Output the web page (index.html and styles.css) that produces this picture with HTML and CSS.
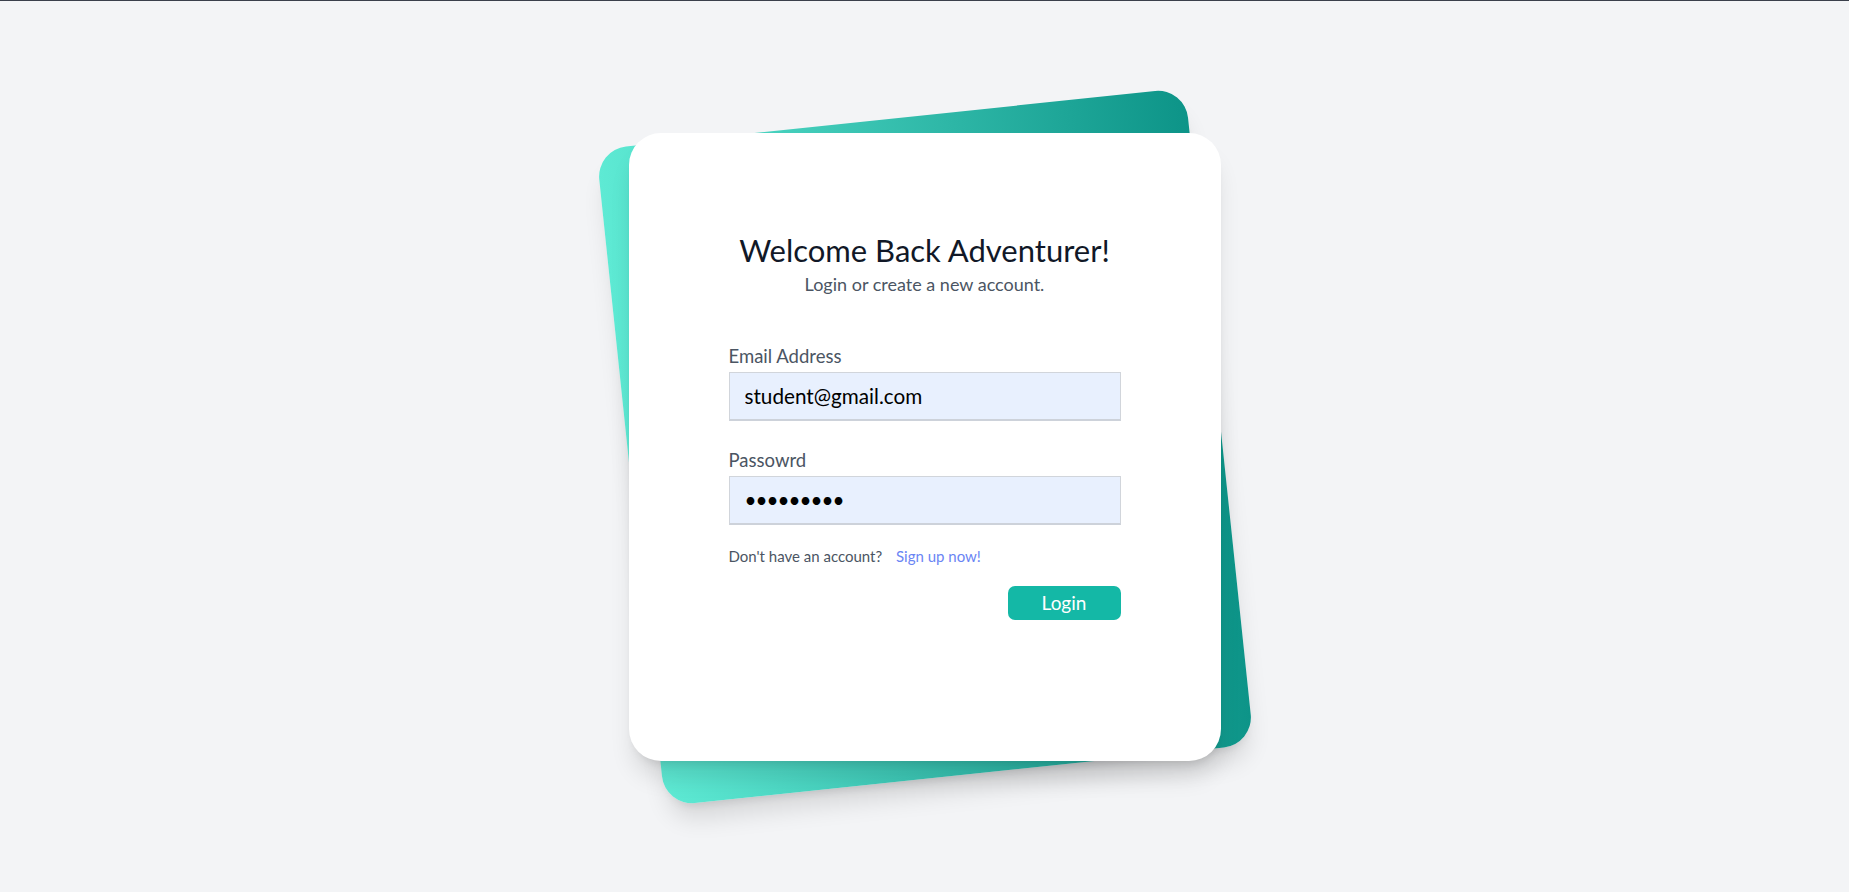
FILE: index.html
```html
<!DOCTYPE html>
<html lang="en">
<head>
<meta charset="utf-8">
<title>Login</title>
<link rel="stylesheet" href="styles.css">
</head>
<body>
<main class="page">
  <div class="stack">
    <div class="back"></div>
    <form class="card">
      <h1 class="title">Welcome Back Adventurer!</h1>
      <p class="subtitle">Login or create a new account.</p>
      <label class="label" for="email">Email Address</label>
      <input class="field" id="email" type="email" value="student@gmail.com">
      <label class="label label-2" for="pw">Passowrd</label>
      <input class="field field-pw" id="pw" type="password" value="studentpw">
      <p class="signup">Don't have an account? <a class="signup-link" href="#">Sign up now!</a></p>
      <div class="actions">
        <button class="btn" type="button">Login</button>
      </div>
    </form>
  </div>
</main>
</body>
</html>
```
FILE: styles.css
```css
* { box-sizing: border-box; }
html, body { margin: 0; padding: 0; }
body {
  background: #f3f4f6;
  border-top: 1px solid #3a3f4b;
  font-family: "Lato", "Noto Sans", sans-serif;
  color: #111827;
}
.page {
  height: calc(100vh - 1px);
  display: flex;
  align-items: center;
  justify-content: center;
}
.stack {
  position: relative;
  width: 592px;
}
.back {
  position: absolute;
  left: 0;
  top: -15.5px;
  width: 592px;
  height: 660px;
  border-radius: 30px;
  background: linear-gradient(to right, #5eead4, #0d9488);
  transform: rotate(-6deg);
  box-shadow: 0 20px 25px -5px rgba(0,0,0,0.12), 0 8px 10px -6px rgba(0,0,0,0.1);
}
.card {
  position: relative;
  background: #fff;
  border-radius: 32px;
  padding: 99px 100px 141px;
  display: flex;
  flex-direction: column;
  box-shadow: 0 20px 25px -5px rgba(0,0,0,0.12), 0 8px 10px -6px rgba(0,0,0,0.1);
}
.title {
  margin: 0;
  font-size: 31px;
  line-height: 36px;
  font-weight: 400;
  text-align: center;
  color: #111827;
}
.subtitle {
  margin: 4px 0 0;
  font-size: 18px;
  line-height: 24px;
  text-align: center;
  color: #4b5563;
}
.label {
  margin-top: 48px;
  font-size: 18.5px;
  line-height: 24px;
  color: #4b5563;
}
.label-2 { margin-top: 27px; }
.field {
  margin-top: 4px;
  width: 392px;
  height: 49px;
  padding: 0 15px;
  border: 1px solid #d1d5db;
  border-bottom: 2px solid #cdd2da;
  background: #e8f0fe;
  font-family: "Lato", "Noto Sans", sans-serif;
  font-size: 20.7px;
  color: #000;
  outline: none;
}
.field-pw { letter-spacing: -1px; }
.signup {
  margin: 21px 0 0;
  font-size: 15px;
  line-height: 20px;
  color: #4b5563;
}
.signup-link {
  margin-left: 10px;
  color: #6a85f4;
  text-decoration: none;
}
.actions {
  margin-top: 20px;
  display: flex;
  justify-content: flex-end;
}
.btn {
  width: 113px;
  height: 34px;
  border: 0;
  border-radius: 7px;
  background: #14b8a6;
  color: #fff;
  font-family: "Lato", "Noto Sans", sans-serif;
  font-size: 19px;
  cursor: pointer;
}
```
